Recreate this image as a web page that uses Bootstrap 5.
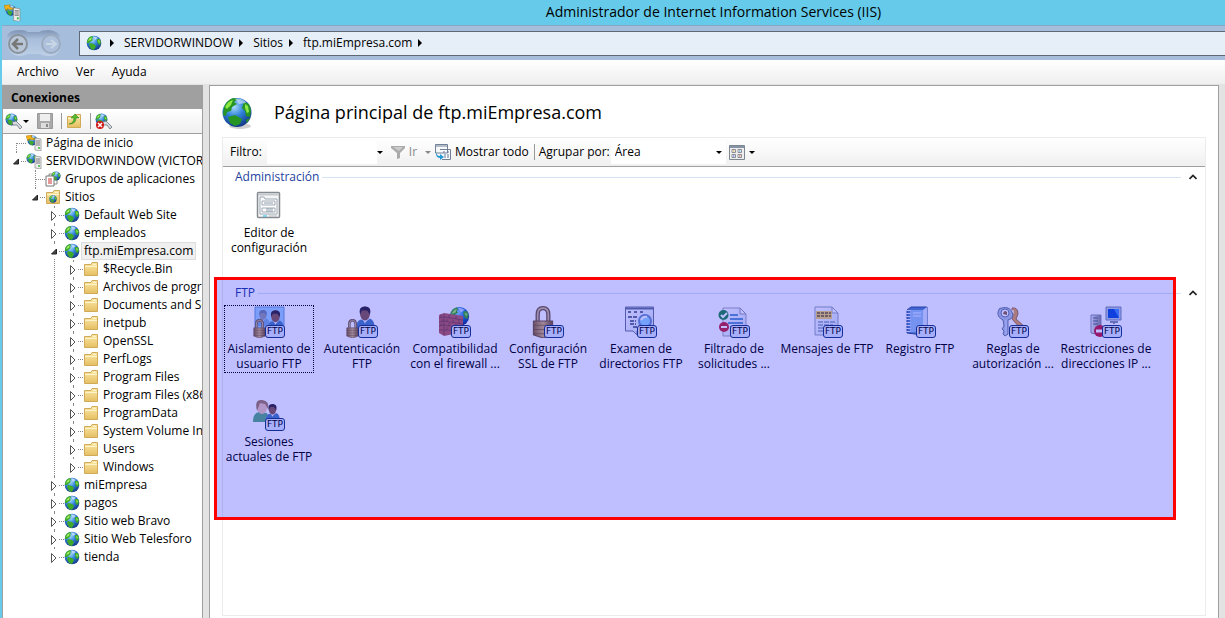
<!DOCTYPE html>
<html lang="es">
<head>
<meta charset="utf-8">
<meta name="viewport" content="width=device-width, initial-scale=1">
<title>Administrador de Internet Information Services (IIS)</title>
<link href="https://cdn.jsdelivr.net/npm/bootstrap@5.3.0/dist/css/bootstrap.min.css" rel="stylesheet">
<style>
body{font:12px/18px "Open Sans","Noto Sans",sans-serif;color:#000;background:#e3e3e3;border-left:2px solid #66cbea}
button,input,select{font:inherit;color:inherit;border:0;background:none;padding:0}
a{color:inherit;text-decoration:none}
svg{display:block;flex:none}
ul{list-style:none;margin:0;padding:0}
.titlebar{height:26px;background:#66cbea;border-bottom:1px solid #86a9c8;margin-left:-2px}
.titlebar h1{font-size:14px;line-height:22px;padding:0 0 2px 202px}
.navrow{height:34px;background:#a6bddb}
.address{height:25px;background:#e6eef7;border:1px solid #5f6875;border-right:0;margin-left:17px;padding-left:6px}
.address a{padding:0 6px 0 10px}
.tri{width:0;height:0;border:4px solid transparent;border-left:4px solid #000;border-right:0}
.drop{width:0;height:0;border:3px solid transparent;border-top:3px solid #000;border-bottom:0;flex:none}
.drop.dim{border-top-color:#888}
.menurow{height:24px;background:linear-gradient(#fff,#efefef);padding-left:15px;gap:17px}
.workarea{padding-top:1px}
.sidebar{width:201px;background:#fff;border:1px solid #a0a0a0;border-bottom:0}
.sidebar h2{font-size:12px;line-height:24px;height:23px;background:#a0a0a0;padding-left:8px}
.toolrow{background:linear-gradient(#fff,#f0f0f0);border-bottom:1px solid #a0a0a0}
.side-tools{height:25px;padding-left:2px}
.vsep{width:1px;height:16px;background:#999;flex:none}
.tree li{position:relative}
.tree li::before{content:"";position:absolute;left:13px;top:0;bottom:0;border-left:1px dotted #888}
.tree li:last-child::before{bottom:auto;height:9px}
.tree>li:first-child::before{top:9px}
.tree ul{padding-left:19px}
.node{height:18px;white-space:nowrap}
.node>*{flex:none}
.node .tgl{width:10px;height:14px;margin-left:8px;position:relative;z-index:1;background:#fff}
.node .nogl{width:10px;margin-left:8px;height:1px}
.dash{width:5px;border-top:1px dotted #888}
.nogl+.dash{width:10px;margin-left:-5px}
.node a{padding:0 3px;margin-left:1px}
.node a.sel{background:#f0f0f0;outline:1px solid #ddd;outline-offset:-1px}
.page-pane{background:#fff;border:1px solid #a0a0a0;border-bottom:0;padding:11px 12px 2px;margin:0 6px}
.page-pane h2{font-size:18px;line-height:30px}
.features{border:1px solid #ececec}
.feat-tools{height:29px;padding-left:7px}
.fld{height:23px;background:#fff}
.filt{width:110px;margin-left:5px}
.combo{width:115px;appearance:none;background:no-repeat right 4px center/6px 3px url("data:image/svg+xml,%3Csvg xmlns='http://www.w3.org/2000/svg' viewBox='0 0 6 3'%3E%3Cpath d='M0 0H6L3 3Z'/%3E%3C/svg%3E")}
.sepmain{margin:0 4px 0 5px}
.lbl-g{width:72px}
.viewbtn{margin-left:3px}
.dimtext{color:#888}
.grp{position:relative;padding-bottom:26px}
.grphead{height:20px;margin-bottom:2px;padding-left:12px;padding-right:8px;gap:3px}
.grphead h3{font-size:12px;line-height:20px;color:#1e3f9e}
.grphead button{margin-left:5px}
.rule{height:1px;background:#d6e5f5}
.tiles{display:grid;grid-template-columns:repeat(auto-fill,90px);gap:25px 3px;padding-left:1px}
.tile{height:68px;line-height:15px;text-align:center;border:1px solid transparent;white-space:nowrap;display:flex;flex-direction:column;align-items:center;gap:3px}
.tile.sel{border:1px dotted #000}
.pic{position:relative;width:32px;height:32px;flex:none}
.tag{position:absolute;right:0;bottom:0;width:20px;height:13px;border:1px solid #1c3d75;border-radius:3px;background:#dfeafa;font:9px/11px "DejaVu Sans",sans-serif;color:#000}
.highlight{position:absolute;left:-9px;right:29px;top:-6px;height:243px;border:3px solid #f00;background:rgba(0,0,255,.25);pointer-events:none}
</style>
</head>
<body class="vh-100 d-flex flex-column overflow-hidden">
<svg width="0" height="0" class="position-absolute" aria-hidden="true">
<defs>
<radialGradient id="sea" cx=".4" cy=".3" r=".75"><stop offset="0" stop-color="#a9dcff"/><stop offset=".45" stop-color="#2f82d8"/><stop offset="1" stop-color="#10307e"/></radialGradient>
<linearGradient id="paper" x2="1" y2="1"><stop stop-color="#fff"/><stop offset="1" stop-color="#d6e0ec"/></linearGradient>
<linearGradient id="gold" x2="1"><stop stop-color="#8b6a35"/><stop offset=".5" stop-color="#d9b777"/><stop offset="1" stop-color="#7a5a2b"/></linearGradient>
<linearGradient id="fold" x2="0" y2="1"><stop stop-color="#fbe9a8"/><stop offset="1" stop-color="#e5bf62"/></linearGradient>
<linearGradient id="steel" x2="1"><stop stop-color="#eee"/><stop offset="1" stop-color="#888"/></linearGradient>
<linearGradient id="pod" x2="0" y2="1"><stop stop-color="#7f94b3"/><stop offset=".35" stop-color="#a8bedb"/><stop offset="1" stop-color="#bccfe6"/></linearGradient>
<symbol id="globe" viewBox="0 0 16 16"><circle cx="8" cy="8" r="7.3" fill="url(#sea)"/><path d="M1 6Q2 2 6 1L7 2 6 4 7 5 4 7 3 8 1 8ZM4 8L8 9 10 11 8 15 5 14 3 10ZM11 4L14 4 15 7 14 10 12 9 11 6Z" fill="#3faa2a"/><path d="M2 6Q3 3 6 2L5 5ZM12 5L14 6 13 8Z" fill="#a4ec60"/><path d="M7 1.6Q10 1 12 3L9 5Z" fill="#fff" opacity=".6"/></symbol>
<symbol id="folder" viewBox="0 0 16 16"><path d="M1.5 3.5L8 3.5 9 1.5H14.500V14.500H1.500Z" fill="url(#fold)" stroke="#d0aa58"/><path d="M2 5.500H14M10 3.500H13" stroke="#fff3c9"/></symbol>
<symbol id="server" viewBox="0 0 16 16"><path d="M9 3L15 4V16L9 15Z" fill="#eee" stroke="#888" stroke-width=".7"/><path d="M10 6H14M10 8H14M10 10H14" stroke="#777"/><circle cx="13" cy="13" r="1" fill="#3b3"/></symbol>
<symbol id="hub" viewBox="0 0 16 16"><use href="#globe" width="11" height="11"/><use href="#server"/></symbol>
<symbol id="home" viewBox="0 0 16 16"><use href="#globe" x="1" width="11" height="11"/><use href="#server"/><path d="M0 1L6 0 5 2 9 4 7 5 3 4 2 6Z" fill="#f6b21b" stroke="#a87300" stroke-width=".5"/></symbol>
<symbol id="lock" viewBox="0 0 20 30"><path d="M5 14V8Q5 2 10 2T15 8V14" fill="none" stroke="#76603f" stroke-width="4"/><path d="M5 14V8Q5 2 10 2T15 8V14" fill="none" stroke="#d7c198" stroke-width="1.500"/><path d="M1 14L19 14V27L10 30 1 27Z" fill="url(#gold)" stroke="#765b34"/><path d="M1 18L19 18M1 22H19M1 26H19" stroke="#705329" opacity=".6"/></symbol>
<symbol id="man" viewBox="0 0 20 24"><path d="M1 23Q1 14 6 13L11 15 15 12Q20 14 20 23Z" fill="#4f82ba"/><path d="M7 12L10 17 13 12" fill="#e8f1fc"/><ellipse cx="10" cy="7" rx="5" ry="7" fill="#8b604d"/><path d="M5 8Q3 0 10 0T15 8L12 4 7 4Z" fill="#392e36"/></symbol>
<symbol id="plug" viewBox="0 0 18 16"><use href="#globe" width="13" height="13"/><path d="M7 9L11 8 17 14 15 16 12 12 8 12Z" fill="#d8dce0" stroke="#68747e" stroke-width=".8"/></symbol>
</defs></svg>

<header>
  <div class="titlebar d-flex align-items-center position-relative">
    <svg class="position-absolute ms-1" width="17" height="20" viewBox="0 0 16 16"><use href="#home"/></svg>
    <h1 class="flex-fill m-0 fw-normal text-center">Administrador de Internet Information Services (IIS)</h1>
  </div>
  <div class="navrow d-flex align-items-center">
    <svg width="56" height="28" class="ms-1" viewBox="0 0 56 28"><path d="M1 9Q1 1 14 1 19 1 22 3H33Q36 1 43 1 55 2 55 13 55 27 44 27 37 27 34 25H21Q18 27 12 27 0 25 1 9Z" fill="url(#pod)"/><g fill="#b8c6d8" stroke="#8a929d" stroke-width="2"><circle cx="12" cy="15" r="9"/><circle cx="45" cy="15" r="9" stroke="#9aabc0" fill="#adc1dc"/></g><path d="M17 15H8M12 10L7 15 12 20" fill="none" stroke="#777" stroke-width="2.500"/><path d="M40 15H49M45 11L50 15 45 19" fill="none" stroke="#c9d6e6" stroke-width="2"/></svg>
    <nav class="address flex-fill d-flex align-items-center" aria-label="Ruta">
      <svg width="16" height="16" class="me-2"><use href="#globe"/></svg>
      <span class="tri"></span><a href="#">SERVIDORWINDOW</a>
      <span class="tri"></span><a href="#">Sitios</a>
      <span class="tri"></span><a href="#">ftp.miEmpresa.com</a><span class="tri"></span>
    </nav>
  </div>
  <div class="menurow d-flex align-items-center" role="menubar"><button role="menuitem">Archivo</button><button role="menuitem">Ver</button><button role="menuitem">Ayuda</button></div>
</header>

<div class="workarea d-flex flex-fill">
<aside class="sidebar d-flex flex-column flex-shrink-0 overflow-hidden">
  <h2 class="m-0 fw-bold flex-shrink-0">Conexiones</h2>
  <div class="toolrow side-tools d-flex align-items-center flex-shrink-0">
    <button aria-label="Conectar" class="d-flex align-items-center"><svg width="18" height="16"><use href="#plug"/></svg><span class="drop"></span></button>
    <button aria-label="Guardar" class="ms-2"><svg width="16" height="16" viewBox="0 0 16 16"><path d="M.5.500H15.500V15.500H.500Z" fill="#aaa" stroke="#999"/><path d="M3 1H13V8H3Z" fill="#eee"/><path d="M4 10H12V15H4Z" fill="#ddd"/><path d="M9 11H11V14H9Z" fill="#888"/></svg></button>
    <span class="vsep ms-2 me-1"></span>
    <button aria-label="Subir"><svg width="16" height="16" viewBox="0 0 16 16"><use href="#folder"/><path d="M3 11Q8 10 8 5H5L9 1 13 5H10Q10 11 3 11Z" fill="#57bd2d" stroke="#34821c" stroke-width=".6"/></svg></button>
    <span class="vsep ms-2 me-1"></span>
    <button aria-label="Desconectar"><svg width="18" height="16" viewBox="0 0 18 16"><use href="#plug"/><circle cx="5" cy="12" r="4" fill="#cf1717"/><path d="M3 10L7 14M7 10L3 14" stroke="#fff" stroke-width="1.500"/></svg></button>
  </div>
  <ul class="tree" id="tree"></ul>
</aside>

<main class="page-pane flex-fill d-flex flex-column">
  <div class="d-flex align-items-start mb-2">
    <svg width="32" height="32" viewBox="0 0 32 32"><ellipse cx="18" cy="29" rx="11" ry="3" fill="#777" opacity=".35"/><circle cx="15" cy="15.500" r="14.500" fill="url(#sea)"/><path d="M2 10Q5 3 11 1L16 2 12 5 15 7 10 10 9 14 5 15 4 19 1 18ZM6 20L13 18 20 22 18 27 13 29 8 26ZM22 5L27 7 29 13 28 20 24 19 23 14 20 11ZM24 23L28 21 25 26Z" fill="#269524"/><path d="M3 10Q6 4 11 3L9 8 5 12ZM23 7L26 9 27 15 25 16 23 11Z" fill="#8ee842"/><path d="M13 2Q21 1 24 6L17 7Z" fill="#fff" opacity=".5"/></svg>
    <h2 class="m-0 ms-3 ps-1 fw-normal">Página principal de ftp.miEmpresa.com</h2>
  </div>
  <section class="features flex-fill">
    <div class="toolrow feat-tools d-flex align-items-center">
      <label for="flt">Filtro:</label><input id="flt" class="fld filt"><span class="drop"></span>
      <button class="d-flex align-items-center gap-1 dimtext ms-2"><svg width="14" height="14" viewBox="0 0 14 14"><path d="M0 1H14V3L9 8V13L6 14V8L0 3Z" fill="#aaa"/><path d="M2 2H12L8 6Z" fill="#ccc"/></svg>Ir</button><span class="drop dim ms-2 me-1"></span>
      <button class="d-flex align-items-center gap-1"><svg width="16" height="16" viewBox="0 0 16 16"><path d="M.5.500H12.500V9H.500ZM1 2H12M5 5.500H15.500V15.500H7" fill="#f6f8fa" stroke="#718096"/><path d="M8 8H10M12 8H14M9 11H11M12 11H14M9 13H11M12 13H14" stroke="#667b99"/><path d="M1 7Q1 12 5 12V10L9 13 5 16V14Q0 14 1 7Z" fill="#2599d4"/></svg>Mostrar todo</button>
      <span class="vsep sepmain"></span>
      <label for="grp" class="lbl-g">Agrupar por:</label><span class="fld d-flex align-items-center"><select id="grp" class="combo ps-1"><option>Área</option></select></span>
      <button aria-label="Vista" class="d-flex align-items-center gap-1 viewbtn"><svg width="16" height="15" viewBox="0 0 16 15"><path d="M.5.500H15.500V14.500H.500Z" fill="#eee" stroke="#7d8792"/><path d="M1 2H15" stroke="#8794a5" stroke-width="2"/><g fill="#fff" stroke="#8d8e95"><path d="M3 4.500H6.500V7.500H3ZM9 4.500H12.500V7.500H9ZM3 9.500H6.500V12.500H3ZM9 9.500H12.500V12.500H9Z"/></g><path d="M4 6H5.500" stroke="#d59a20"/><path d="M10 6H11.500" stroke="#219dd5"/><path d="M4 11H5.500" stroke="#335bd1"/><path d="M10 11H11.500" stroke="#d14a35"/></svg><span class="drop"></span></button>
    </div>
    <div class="grp">
      <div class="d-flex align-items-center grphead"><h3 class="m-0 fw-normal">Administración</h3><span class="rule flex-fill"></span><button aria-label="Contraer Administración"><svg width="8" height="6" viewBox="0 0 8 6"><path d="M0.500 5L4 1.500 7.500 5" fill="none" stroke="#222" stroke-width="1.700"/></svg></button></div>
      <div class="tiles"><button class="tile"><span class="pic"><svg width="32" height="32" viewBox="0 0 32 32"><rect x="4.500" y="2.500" width="22" height="25" rx="1" fill="#f4f5f6" stroke="#858b91" stroke-width="1.500"/><path d="M5 4.500H26" stroke="#c4c9cd" stroke-width="2"/><path d="M7 7H11L12 9H24V24H7ZM9 11H22V15H9ZM9 18H22V22H9Z" fill="#fff" stroke="#9ca8b3"/><path d="M11 13H20M13 19H20M13 21H20" stroke="#8a98a6"/><path d="M10 26H14" stroke="#20bce8"/><path d="M16 26H24" stroke="#bbb"/></svg></span><span>Editor de<br>configuración</span></button></div>
    </div>
    <div class="grp">
      <div class="d-flex align-items-center grphead"><h3 class="m-0 fw-normal">FTP</h3><span class="rule flex-fill"></span><button aria-label="Contraer FTP"><svg width="8" height="6" viewBox="0 0 8 6"><path d="M0.500 5L4 1.500 7.500 5" fill="none" stroke="#222" stroke-width="1.700"/></svg></button></div>
      <div class="tiles">
        <button class="tile sel"><span class="pic"><svg width="32" height="32" viewBox="0 0 32 32"><path d="M2 1H31V23H2Z" fill="#a5d3f8" stroke="#6f9fd2"/><use href="#man" x="3" y="3" width="14" height="19" opacity=".45"/><use href="#man" x="14" y="4" width="17" height="21"/><use href="#lock" x="0" y="13" width="13" height="19"/></svg><span class="tag">FTP</span></span><span>Aislamiento de<br>usuario FTP</span></button>
        <button class="tile"><span class="pic"><svg width="32" height="32" viewBox="0 0 32 32"><use href="#man" x="9" y="0" width="20" height="25"/><use href="#lock" x="0" y="13" width="13" height="19"/></svg><span class="tag">FTP</span></span><span>Autenticación<br>FTP</span></button>
        <button class="tile"><span class="pic"><svg width="32" height="32" viewBox="0 0 32 32"><use href="#globe" x="10" width="21" height="21"/><path d="M0 9L5 7 24 10V26L5 30 0 27Z" fill="#b9635a"/><path d="M5 8V29M0 12L5 11 24 14M0 16L5 15 24 18M0 20L5 19 24 22M0 24L5 24 24 25M10 9V12M17 10V13M8 13V16M14 14V17M20 14V18M10 17V20M17 17V21M8 21V24M14 21V25M20 22V25M2 8V12M3 13V16M2 17V20" stroke="#7c4345" stroke-width=".7" fill="none"/></svg><span class="tag">FTP</span></span><span>Compatibilidad<br>con el firewall ...</span></button>
        <button class="tile"><span class="pic"><svg width="32" height="32"><use href="#lock" x="0" y="0" width="22" height="32"/></svg><span class="tag">FTP</span></span><span>Configuración<br>SSL de FTP</span></button>
        <button class="tile"><span class="pic"><svg width="32" height="32" viewBox="0 0 32 32"><path d="M.5 1H28.500V25H12V29L8 25H.500Z" fill="url(#paper)" stroke="#707b95"/><path d="M1 2.500H28" stroke="#6a7795" stroke-width="2"/><path d="M3 6H6M9 6H12M15 6H18M3 11H13M5 15H11M5 18H11M8 21H12" stroke="#41506f" stroke-width="1.500" stroke-dasharray="4 1"/><path d="M22 19L28 25" stroke="#996d52" stroke-width="4"/><circle cx="20" cy="15" r="6" fill="#9bd7fb" stroke="#6f92c5" stroke-width="2"/><path d="M16 14Q18 10 22 11" fill="none" stroke="#fff" stroke-width="2"/></svg><span class="tag">FTP</span></span><span>Examen de<br>directorios FTP</span></button>
        <button class="tile"><span class="pic"><svg width="32" height="32" viewBox="0 0 32 32"><path d="M5 2H22L28 8V30H5Z" fill="url(#paper)" stroke="#a7a7b8"/><path d="M22 2V8H28Z" fill="#fff" stroke="#9999ab"/><path d="M12 9H20M12 13H25M10 17H25M12 21H25" stroke="#397bbd" stroke-width="1.500"/><circle cx="5.500" cy="9" r="5" fill="#278c49"/><circle cx="6" cy="21" r="5" fill="#c92d3c"/><path d="M3 9L5 11 9 7M3 21H9" fill="none" stroke="#fff" stroke-width="2"/></svg><span class="tag">FTP</span></span><span>Filtrado de<br>solicitudes ...</span></button>
        <button class="tile"><span class="pic"><svg width="32" height="32" viewBox="0 0 32 32"><path d="M4 1H21L27 7V29H4Z" fill="url(#paper)" stroke="#9aa5b6"/><path d="M21 1V7H27Z" fill="#fff" stroke="#9aa5b6"/><path d="M5 5H21V13H5Z" fill="#f5d468"/><path d="M6 7H20M6 10H20" stroke="#775f29" stroke-width="1.500" stroke-dasharray="3 1"/><path d="M7 16H24M7 19H22M7 22H12M7 25H12" stroke="#607a9d" stroke-dasharray="5 1"/></svg><span class="tag">FTP</span></span><span>Mensajes de FTP</span></button>
        <button class="tile"><span class="pic"><svg width="32" height="32" viewBox="0 0 32 32"><path d="M3 4L7 1H23V25L19 29 3 27Z" fill="#5786c2" stroke="#355589"/><path d="M6 4H19V27L6 26Z" fill="#9ec3ed"/><path d="M19 4L23 1V24L19 28Z" fill="#d9e4f4"/><path d="M9 7H17M9 10H17" stroke="#e4f1ff"/><path d="M4 4V27" stroke="#eef" stroke-width="5" stroke-dasharray="1 2"/></svg><span class="tag">FTP</span></span><span>Registro FTP</span></button>
        <button class="tile"><span class="pic"><svg width="32" height="32" viewBox="0 0 32 32"><path d="M15 2Q21 1 21 8L19 13 28 21V24L24 23 15 13Z" fill="#e6a552" stroke="#a87747"/><circle cx="15" cy="6" r="2" fill="#fff"/><path d="M5 2Q12 0 15 6T11 14L11 28 8 30 6 28 7 25 5 23 7 20 6 14Q0 11 1 6T5 2Z" fill="#b7c6d8" stroke="#708299"/><circle cx="8" cy="7" r="4" fill="#fff" stroke="#6f819c"/><path d="M6 8Q7 3 10 6V9Z" fill="#946944"/><path d="M9 14V28" stroke="#e4edfc"/></svg><span class="tag">FTP</span></span><span>Reglas de<br>autorización ...</span></button>
        <button class="tile"><span class="pic"><svg width="32" height="32" viewBox="0 0 32 32"><path d="M1 9H11V29L1 27Z" fill="url(#steel)" stroke="#8794aa"/><path d="M3 12H8M3 15H8M3 18H8" stroke="#52627d"/><path d="M16 1H31V14H16Z" fill="#bdcbdd" stroke="#7e91aa"/><path d="M18 3H29V12H18Z" fill="#1554d0"/><path d="M24 3H29V12Z" fill="#4d91f4"/><path d="M20 16H28" stroke="#8996a9" stroke-width="2"/><path d="M24 17V22" stroke="#223" stroke-dasharray="1 2"/><circle cx="10" cy="25" r="6" fill="#c91f3a"/><path d="M6 25H14" stroke="#fff" stroke-width="3"/></svg><span class="tag">FTP</span></span><span>Restricciones de<br>direcciones IP ...</span></button>
        <button class="tile"><span class="pic"><svg width="32" height="32" viewBox="0 0 32 32"><path d="M0 23Q0 14 6 13L14 14 17 23Z" fill="#5fae80"/><ellipse cx="9" cy="8" rx="5" ry="7" fill="#efc9b6"/><path d="M4 12Q1 0 9 1T15 10L12 5 7 4Z" fill="#a68160"/><use href="#man" x="12" y="4" width="15" height="20"/></svg><span class="tag">FTP</span></span><span>Sesiones<br>actuales de FTP</span></button>
      </div>
      <div class="highlight"></div>
    </div>
  </section>
</main>
</div>
<script>
// Tree of connections: [label, icon, state, children, selected]
const folders=["$Recycle.Bin","Archivos de programa","Documents and Settings","inetpub","OpenSSL","PerfLogs","Program Files","Program Files (x86)","ProgramData","System Volume Information","Users","Windows"].map(n=>[n,"folder","closed"]);
const site=n=>[n,"globe","closed"];
const data=[["Página de inicio","home"],["SERVIDORWINDOW (VICTORW","hub","open",[["Grupos de aplicaciones","pools"],["Sitios","sites","open",[site("Default Web Site"),site("empleados"),["ftp.miEmpresa.com","globe","open",folders,true],site("miEmpresa"),site("pagos"),site("Sitio web Bravo"),site("Sitio Web Telesforo"),site("tienda")]]]]];
const art={
 pools:'<path d="M4 3H12V13H4Z" fill="#fff" stroke="#888"/><use href="#globe" x="6" width="10" height="10"/><path d="M1 5H9V15H1Z" fill="#fff" stroke="#777"/><path d="M3 8H7M3 10H7M3 12H7" stroke="#c33"/>',
 sites:'<use href="#folder"/><use href="#globe" x="4" y="6" width="8" height="8"/>'};
const tgl={open:'<path d="M7.500 5V10H2.500Z" fill="#444" stroke="#222"/>',closed:'<path d="M2.500 3.500L7 8 2.500 12.500Z" fill="#fff" stroke="#555"/>'};
const draw=list=>list.map(([n,ic,st,kids,sel])=>`<li><div class="node d-flex align-items-center">${st?`<button class="tgl" aria-label="${n}"><svg width="10" height="14">${tgl[st]}</svg></button>`:'<span class="nogl"></span>'}<span class="dash"></span><svg width="16" height="16" viewBox="0 0 16 16">${art[ic]||`<use href="#${ic}"/>`}</svg><a href="#" class="${sel?'sel':''}">${n}</a></div>${kids?`<ul>${draw(kids)}</ul>`:''}</li>`).join('');
document.getElementById('tree').innerHTML=draw(data);
</script>
<script src="https://cdn.jsdelivr.net/npm/bootstrap@5.3.0/dist/js/bootstrap.bundle.min.js"></script>
</body>
</html>
